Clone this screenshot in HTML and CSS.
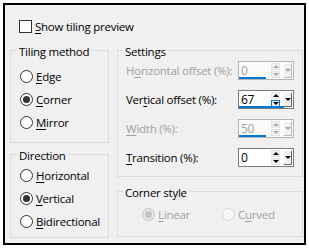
FILE: index.html
```html
<!DOCTYPE html>
<html lang="en">
<head>
    <meta charset="UTF-8" />
    <title>Tiling options</title>
    <link rel="stylesheet" href="styles.css">
</head>
<body>
    <div class="dialog">
        <div class="check"><span class="box"></span><span><u>S</u>how tiling preview</span></div>

        <div class="groups">
            <div class="col">
                <fieldset class="group tiling">
                    <legend>Tiling method</legend>
                    <div class="radio"><span class="dot"></span><span><u>E</u>dge</span></div>
                    <div class="radio on"><span class="dot"></span><span><u>C</u>orner</span></div>
                    <div class="radio"><span class="dot"></span><span><u>M</u>irror</span></div>
                </fieldset>
                <fieldset class="group direction">
                    <legend>Direction</legend>
                    <div class="radio"><span class="dot"></span><span><u>H</u>orizontal</span></div>
                    <div class="radio on"><span class="dot"></span><span><u>V</u>ertical</span></div>
                    <div class="radio"><span class="dot"></span><span><u>B</u>idirectional</span></div>
                </fieldset>
            </div>

            <div class="col">
                <fieldset class="group settings">
                    <legend>Settings</legend>
                    <div class="row off">
                        <span class="lbl">H<u>o</u>rizontal offset (%):</span>
                        <span class="spin"><span class="val">0</span><span class="arrows"><i class="up"></i><i class="down"></i></span><span class="drop"></span><span class="bar" style="width:50%"></span></span>
                    </div>
                    <div class="row">
                        <span class="lbl">Ver<u>t</u>ical offset (%):</span>
                        <span class="spin"><span class="val">67</span><span class="arrows"><i class="up"></i><i class="down hot"></i></span><span class="drop"></span><span class="bar" style="width:83%"></span></span>
                    </div>
                    <div class="row off">
                        <span class="lbl"><u>W</u>idth (%):</span>
                        <span class="spin"><span class="val">50</span><span class="arrows"><i class="up"></i><i class="down"></i></span><span class="drop"></span><span class="bar" style="width:50%"></span></span>
                    </div>
                    <div class="row">
                        <span class="lbl"><u>T</u>ransition (%):</span>
                        <span class="spin"><span class="val">0</span><span class="arrows"><i class="up"></i><i class="down"></i></span><span class="drop"></span></span>
                    </div>
                </fieldset>
                <fieldset class="group corner">
                    <legend>Corner style</legend>
                    <div class="opts">
                        <div class="radio on off"><span class="dot"></span><span><u>L</u>inear</span></div>
                        <div class="radio off"><span class="dot"></span><span>C<u>u</u>rved</span></div>
                    </div>
                </fieldset>
            </div>
        </div>
    </div>
</body>
</html>
```

FILE: styles.css
```css
* {
    box-sizing: border-box;
}
body {
    margin: 0;
    background: #fff;
    font-family: "Open Sans", "Noto Sans", sans-serif;
    font-size: 11.5px;
    letter-spacing: -0.25px;
    color: #000;
}
.dialog {
    margin: 3px;
    width: 303px;
    height: 242px;
    border: 2px solid #000;
    background: #f0f0f0;
    padding: 15px 0 0 5px;
}
u {
    text-decoration: underline;
    text-underline-offset: 2px;
}

/* checkbox */
.check {
    display: flex;
    align-items: center;
    gap: 3px;
    height: 13px;
    margin-left: 9px;
    line-height: 13px;
}
.check .box {
    width: 13px;
    height: 13px;
    border: 1px solid #333;
    background: #fff;
}

/* group boxes */
.groups {
    display: flex;
    gap: 8px;
    margin-top: 10px;
}
.col {
    display: flex;
    flex-direction: column;
}
.group {
    margin: 0;
    min-width: 0;
    border: 1px solid #dcdcdc;
    padding: 0 0 0 9px;
}
.group legend {
    line-height: 12px;
    padding: 3px 2px 0;
    margin-left: -3px;
}
.tiling {
    width: 99px;
    padding-top: 7px;
    padding-bottom: 8px;
}
.direction {
    width: 99px;
    margin-top: 4px;
    padding-top: 2px;
    padding-bottom: 4px;
}
.settings {
    width: 186px;
    padding: 3px 8px 9px 8px;
}
.corner {
    width: 186px;
    margin-top: 7px;
    padding: 4px 0 10px 8px;
}
.opts {
    display: flex;
    padding-left: 16px;
}

/* radio buttons */
.radio {
    display: flex;
    align-items: center;
    gap: 3px;
    height: 23px;
}
.opts .radio {
    width: 81px;
}
.dot {
    width: 13px;
    height: 13px;
    border: 1px solid #333;
    border-radius: 50%;
    background: #fff;
    display: flex;
    align-items: center;
    justify-content: center;
}
.radio.on .dot::after {
    content: "";
    width: 7px;
    height: 7px;
    border-radius: 50%;
    background: #333;
}
.radio.off {
    color: #a0a0a0;
}
.radio.off .dot {
    border-color: #d4d4d4;
    background: #f7f7f7;
}
.radio.off.on .dot {
    border-color: #c4c4c4;
    background: #e6e6e6;
}
.radio.off.on .dot::after {
    background: #c4c4c4;
}

/* spin rows */
.row {
    display: flex;
    align-items: center;
    justify-content: space-between;
    height: 19px;
    margin-bottom: 10px;
    white-space: nowrap;
}
.row:last-child {
    margin-bottom: 0;
}
.spin {
    position: relative;
    width: 56px;
    height: 19px;
    border: 1px solid #7a7a7a;
    background: #fff;
    display: flex;
    align-items: center;
    padding-left: 2px;
    font-size: 12px;
}
.val {
    flex: 1;
}
.arrows {
    width: 9px;
    height: 15px;
    display: flex;
    flex-direction: column;
    gap: 1px;
    margin-right: 3px;
}
.arrows i {
    flex: 1;
    display: flex;
    align-items: center;
    justify-content: center;
    border: 1px solid #e3e3e3;
    background: #f0f0f0;
}
.arrows .up::after {
    content: "";
    border-left: 3px solid transparent;
    border-right: 3px solid transparent;
    border-bottom: 3px solid #000;
}
.arrows .down::after {
    content: "";
    border-left: 3px solid transparent;
    border-right: 3px solid transparent;
    border-top: 3px solid #000;
}
.arrows .hot {
    border-color: #0078d7;
    background: #e5f1fb;
}
.drop {
    width: 9px;
    height: 15px;
    margin-right: 1px;
    border: 1px solid;
    border-color: #fff #696969 #696969 #fff;
    background: #f0f0f0;
    display: flex;
    align-items: center;
    justify-content: center;
}
.drop::after {
    content: "";
    border-left: 3px solid transparent;
    border-right: 3px solid transparent;
    border-top: 3px solid #000;
}
.bar {
    position: absolute;
    left: 0;
    bottom: 0;
    height: 2px;
    background: #0078d7;
}
.row.off .lbl,
.row.off .val {
    color: #a0a0a0;
}
.row.off .spin {
    border-color: #b4b4b4;
    background: #fbfbfb;
}
.row.off .arrows i::after,
.row.off .drop::after {
    border-top-color: #a8a8a8;
    border-bottom-color: #a8a8a8;
}
.row.off .drop {
    border-color: #fff #b8b8b8 #b8b8b8 #fff;
}
```
